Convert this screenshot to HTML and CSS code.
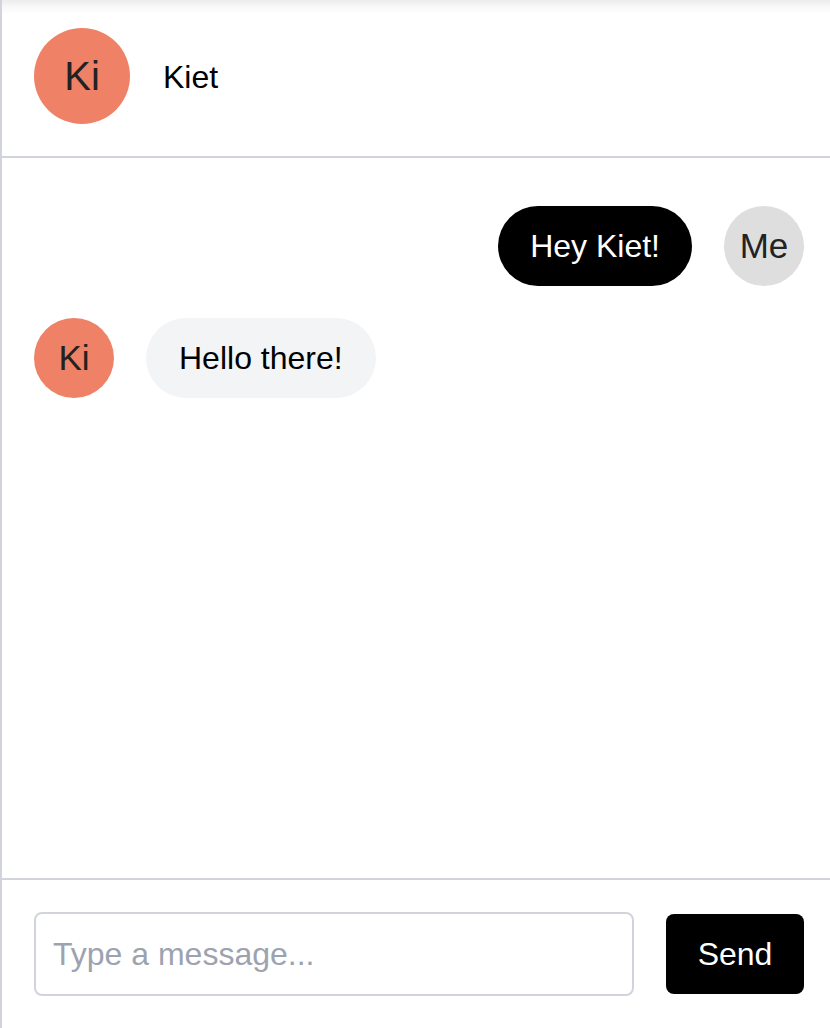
FILE: index.html
```html
<!DOCTYPE html>
<html lang="en">
<head>
<meta charset="utf-8">
<title>Chat with Kiet</title>
<link rel="stylesheet" href="styles.css">
</head>
<body>
<div class="chat">
  <header class="chat-header">
    <div class="avatar avatar-lg avatar-kiet">Ki</div>
    <div class="chat-name">Kiet</div>
  </header>
  <main class="messages">
    <div class="row row-me">
      <div class="bubble bubble-me">Hey Kiet!</div>
      <div class="avatar avatar-sm avatar-me">Me</div>
    </div>
    <div class="row row-them">
      <div class="avatar avatar-sm avatar-kiet">Ki</div>
      <div class="bubble bubble-them">Hello there!</div>
    </div>
  </main>
  <footer class="composer">
    <input class="composer-input" type="text" placeholder="Type a message...">
    <button class="send-btn" type="button">Send</button>
  </footer>
</div>
</body>
</html>
```

FILE: styles.css
```css
* { box-sizing: border-box; }

html, body {
  margin: 0;
  padding: 0;
  height: 100%;
  background: #ffffff;
}

body {
  font-family: "Liberation Sans", Arial, Helvetica, sans-serif;
  color: #000;
  overflow: hidden;
}

.chat {
  display: flex;
  flex-direction: column;
  height: 100vh;
  border-left: 2px solid #d1d5db;
}

.chat-header {
  display: flex;
  align-items: center;
  gap: 33px;
  padding: 28px 26px 32px 32px;
  border-bottom: 2px solid #d1d5db;
  background: linear-gradient(#ececec 0px, #f7f7f7 6px, #ffffff 14px);
}

.avatar {
  flex: none;
  border-radius: 50%;
  display: flex;
  align-items: center;
  justify-content: center;
  color: #222;
}

.avatar-lg {
  width: 96px;
  height: 96px;
  font-size: 40px;
}

.avatar-sm {
  width: 80px;
  height: 80px;
  font-size: 35px;
}

.avatar-kiet { background: #ee8166; }
.avatar-me { background: #dedede; }

.chat-name {
  font-size: 32px;
  padding-top: 2px;
}

.messages {
  flex: 1;
  display: flex;
  flex-direction: column;
  gap: 32px;
  padding: 48px 26px 32px 32px;
}

.row {
  display: flex;
  align-items: center;
  gap: 32px;
}

.row-me { justify-content: flex-end; }
.row-them { justify-content: flex-start; }

.bubble {
  font-size: 32px;
  line-height: 48px;
  padding: 16px 32px;
  border-radius: 40px;
}

.bubble-me {
  background: #000;
  color: #fff;
}

.bubble-them {
  background: #f3f4f6;
  color: #000;
  padding: 16px 33px;
}

.composer {
  display: flex;
  align-items: center;
  gap: 32px;
  padding: 32px 26px 32px 32px;
  border-top: 2px solid #d1d5db;
}

.composer-input {
  flex: 1;
  min-width: 0;
  height: 84px;
  font-family: inherit;
  font-size: 32px;
  line-height: 48px;
  padding: 16px 17px;
  border: 2px solid #d1d5db;
  border-radius: 8px;
  color: #000;
  background: #fff;
  outline: none;
}

.composer-input::placeholder {
  color: #9ca3af;
}

.send-btn {
  flex: none;
  width: 138px;
  font-family: inherit;
  font-size: 32px;
  line-height: 48px;
  padding: 16px 0;
  text-align: center;
  background: #000;
  color: #fff;
  border: none;
  border-radius: 8px;
}
```
